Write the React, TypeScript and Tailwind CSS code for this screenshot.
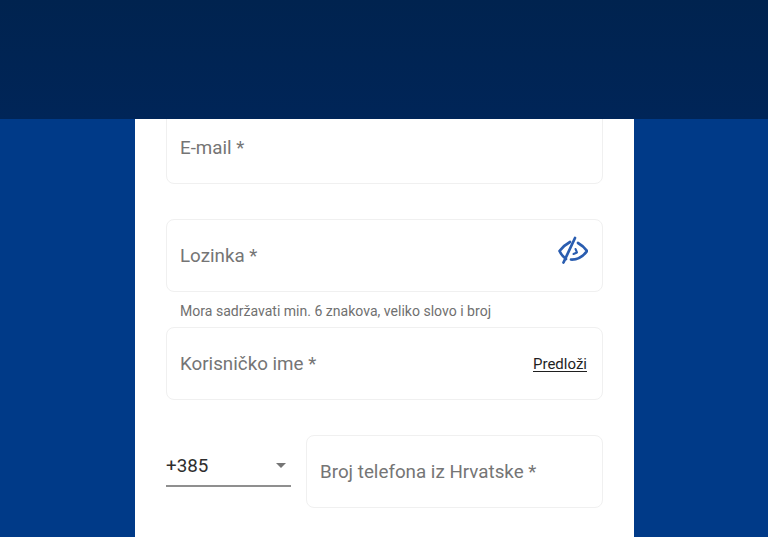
import React from "react";

function Field({ label, right, className = "", labelClass = "" }: { label: string; right?: React.ReactNode; className?: string; labelClass?: string }) {
  return (
    <div className={`h-[73px] rounded-[8px] border border-[#f0f0f0] bg-white flex items-center justify-between pl-[13px] pr-[15px] ${className}`}>
      <span className={`text-[18.8px] leading-[24px] text-[#757575] ${labelClass}`}>{label}</span>
      {right}
    </div>
  );
}

export default function App() {
  return (
    <div className="w-[768px] h-[537px] overflow-hidden flex flex-col bg-[#003a88] font-['Roboto',sans-serif]">
      <header className="h-[119px] shrink-0 bg-gradient-to-b from-[#00234f] to-[#002558]" />
      <main className="flex-1 min-h-0 flex justify-center pl-[1px]">
        <div className="w-[499px] h-full bg-white overflow-hidden px-[31px]">
          <div className="-mt-[9px]">
            <Field label="E-mail *" className="mt-[1px]" />
            <Field
              className="mt-[35px]"
              label="Lozinka *"
              right={
                <svg width="30" height="30" viewBox="0 0 30 30" fill="none" stroke="#2a5db0" strokeWidth="2.7" strokeLinecap="round" strokeLinejoin="round" className="-mt-[9px] -mr-[1px]">
                  <path d="M12 6 Q5.5 9.5 1.5 15 Q4 20 8 23" />
                  <path d="M20 7 Q25.5 10 29 15 Q22.5 24 13 23.5" />
                  <path d="M17 2 L5.5 26.5" />
                  <path d="M17.5 13 L19 16.5 L15.5 18" strokeWidth="2" />
                </svg>
              }
            />
            <p className="h-[35px] pl-[14px] pt-[11px] text-[14.05px] leading-[17px] text-[#707070]">
              Mora sadržavati min. 6 znakova, veliko slovo i broj
            </p>
            <Field
              label="Korisničko ime *"
              right={<span className="text-[15px] leading-[20px] text-[#1f1f1f] underline underline-offset-2">Predloži</span>}
            />
            <div className="mt-[35px] flex items-start gap-[15px]">
              <div className="w-[125px] h-[52px] border-b-2 border-[#8f8f8f] flex items-center justify-between pr-[5px]">
                <span className="text-[18.8px] leading-[24px] text-[#2e2e2e] mt-[11px]">+385</span>
                <span className="w-0 h-0 border-x-[5px] border-x-transparent border-t-[5px] border-t-[#757575] mt-[10px]" />
              </div>
              <Field label="Broj telefona iz Hrvatske *" className="flex-1" />
            </div>
          </div>
        </div>
      </main>
    </div>
  );
}
